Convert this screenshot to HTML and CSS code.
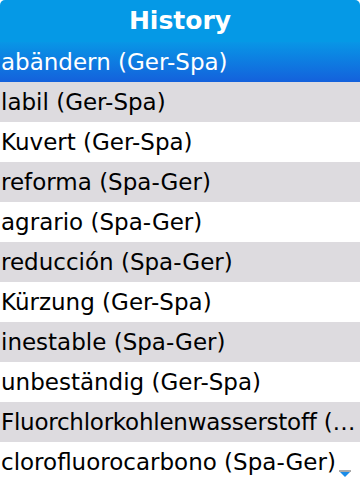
FILE: index.html
```html
<!DOCTYPE html>
<html lang="de">
<head>
  <meta charset="UTF-8" />
  <meta name="viewport" content="width=device-width, initial-scale=1.0"/>
  <title>History</title>
  <link rel="stylesheet" href="styles.css">
</head>
<body>

  <div class="screen">
    <div class="header">History</div>

    <ul class="history">
      <li class="selected">abändern (Ger-Spa)</li>
      <li class="odd">labil (Ger-Spa)</li>
      <li>Kuvert (Ger-Spa)</li>
      <li class="odd">reforma (Spa-Ger)</li>
      <li>agrario (Spa-Ger)</li>
      <li class="odd">reducción (Spa-Ger)</li>
      <li>Kürzung (Ger-Spa)</li>
      <li class="odd">inestable (Spa-Ger)</li>
      <li>unbeständig (Ger-Spa)</li>
      <li class="odd long">Fluorchlorkohlenwasserstoff (…</li>
      <li>clorofluorocarbono (Spa-Ger)</li>
    </ul>

    <svg class="more" width="12" height="8" viewBox="0 0 12 8">
      <path d="M0 1 L12 1" stroke="#555" stroke-width="1"/>
      <path d="M1 2 L11 2 L6 7 Z" fill="#1a8ce8"/>
    </svg>
  </div>

</body>
</html>
```

FILE: styles.css
```css
body {
  margin: 0;
  font-family: "DejaVu Sans", sans-serif;
  background: #fff;
}
.screen {
  position: relative;
  width: 360px;
  height: 480px;
  overflow: hidden;
}
.header {
  height: 42px;
  line-height: 42px;
  text-align: center;
  color: #fff;
  font-weight: bold;
  font-size: 25px;
  background: #0599e6;
  border-radius: 5px 5px 0 0;
}
.history {
  list-style: none;
  margin: 0;
  padding: 0;
}
.history li {
  height: 40px;
  line-height: 40px;
  padding: 0 1px;
  font-size: 23px;
  color: #000;
  background: #fff;
  white-space: nowrap;
  overflow: hidden;
}
.history li.odd {
  background: #dddbdf;
}
.history li.long {
  letter-spacing: -0.25px;
}
.history li.selected {
  color: #fff;
  background: linear-gradient(#0896e6, #1461dc);
}
.more {
  position: absolute;
  right: 9px;
  bottom: 2px;
}
```
